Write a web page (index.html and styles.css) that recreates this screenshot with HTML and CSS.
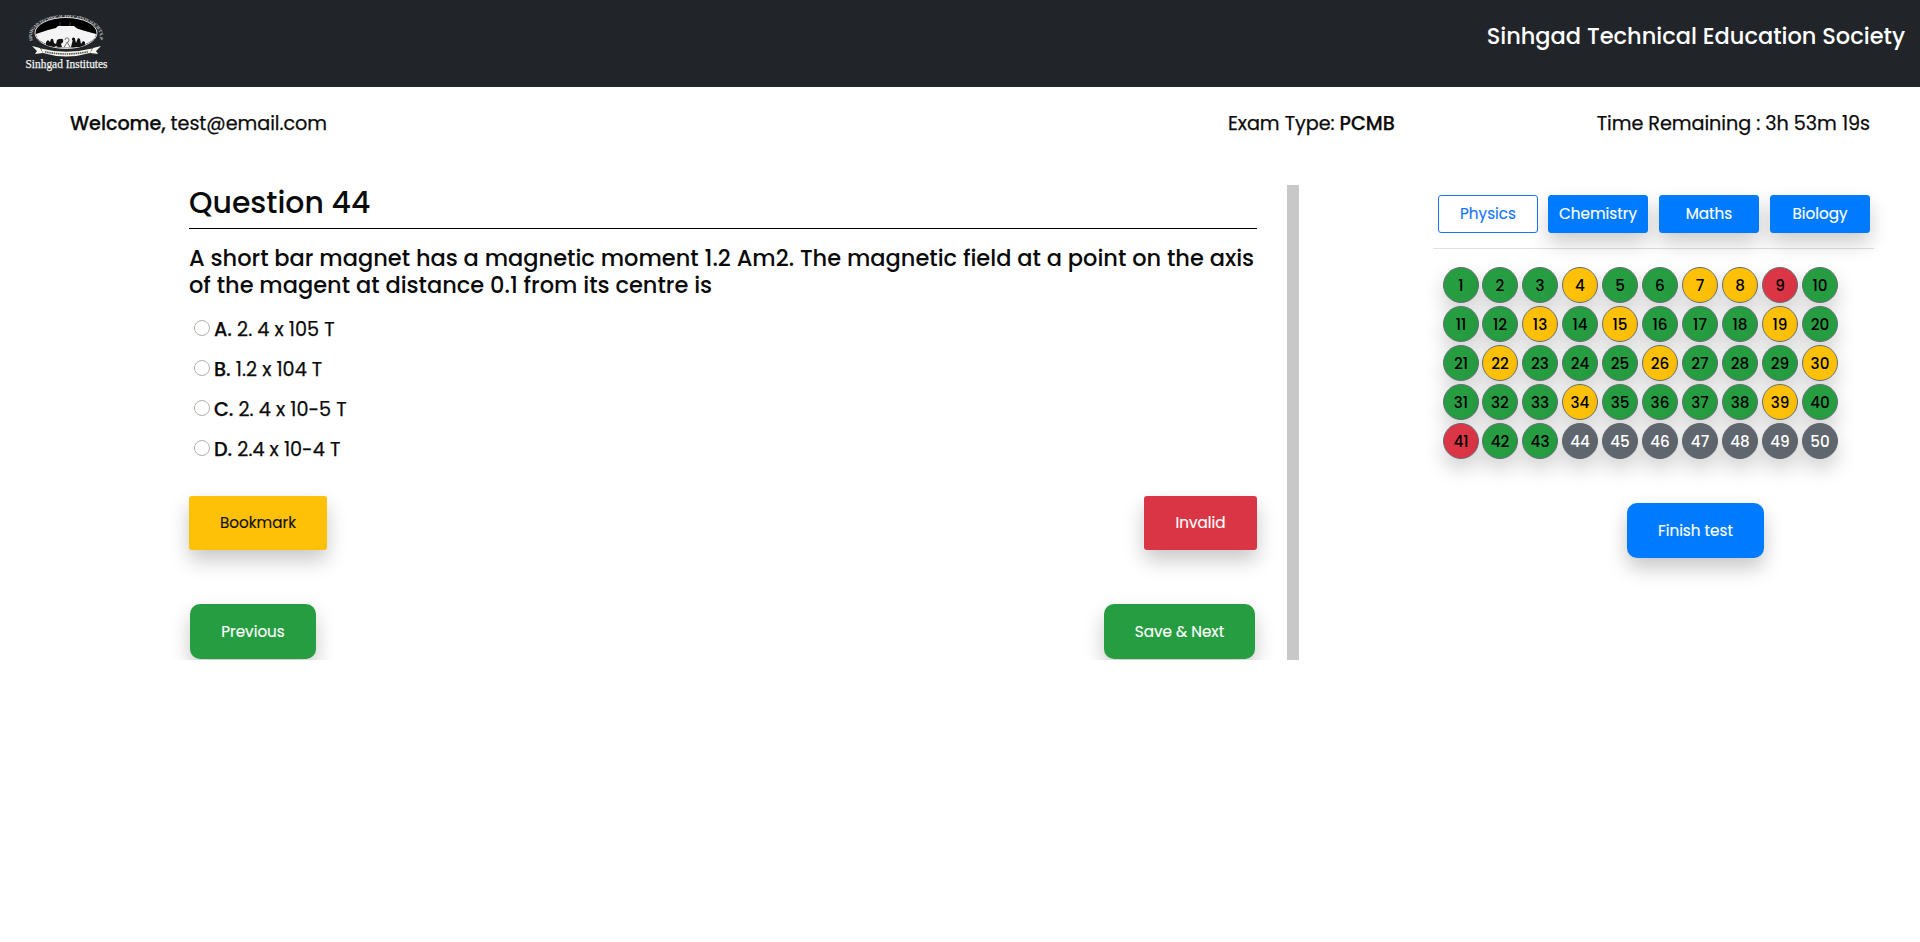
FILE: index.html
```
<!DOCTYPE html>
<html lang="en">
<head>
<meta charset="utf-8">
<title>Sinhgad Technical Education Society</title>
<link rel="stylesheet" href="styles.css">
</head>
<body>
<header class="navbar">
  <svg class="logo" width="90" height="66" viewBox="22 8 90 66" role="img" aria-label="Sinhgad Institutes">
    <defs><path id="arc" d="M33 40.5 A34 18.2 0 1 1 99 40.5"/></defs>
    <text class="logo-arc"><textPath href="#arc">SINHGAD TECHNICAL EDUCATION SOCIETY, PUNE</textPath></text>
    <ellipse cx="66" cy="33" rx="31" ry="15.5" fill="#000" stroke="#d8d8d8" stroke-width="1"/>
    <path d="M36 34 L48 30 L56 28 L58 26 H74 L77 28.5 L85 31 L96 34 C96 42 80 47.7 66 47.7 S36 42 36 34Z" fill="#f4f4f4"/>
    <path d="M60 26V22M70 26V22" stroke="#555" stroke-width=".7"/>
    <path d="M46 45V42l2-2 2 2 1-3h2l1 4 2 1 1-4 2-1 3 0 1 2-2 3 1 3h-4l-2-1-2 1zM71 47l2-8h2l1 4 2-5 2 1 1 5 2-3 2 1v3l-5 2z" fill="#111"/>
    <circle cx="61" cy="41" r="2.3" fill="#111"/><circle cx="73.5" cy="39" r="1.6" fill="#111"/>
    <path d="M65 40a2 2.3 0 1 1 2 2.4l-3 5M67 42l3 5" fill="none" stroke="#555" stroke-width=".8"/>
    <path d="M32 46l8 2 3 5-8 1 2-3zM101 46l-8 2-3 5 8 1-2-3z" fill="#f5f5ea"/>
    <path d="M41 48.5Q66 55 92 48.5L90 53Q66 60 43 53Z" fill="#f5f5ea"/>
    <path d="M45 51.7Q66 56.3 88 51.7" fill="none" stroke="#555" stroke-width="1.6" stroke-dasharray="1.5 .7"/>
    <text class="logo-name" x="25.5" y="68" textLength="82" lengthAdjust="spacingAndGlyphs">Sinhgad Institutes</text>
  </svg>
  <h1 class="brand">Sinhgad Technical Education Society</h1>
</header>
<section class="info">
  <div class="welcome"><b>Welcome,</b> test@email.com</div>
  <div class="exam">Exam Type: <b>PCMB</b></div>
  <div class="time">Time Remaining : 3h 53m 19s</div>
</section>
<main class="main">
  <section class="question">
    <h2 class="q-title">Question 44</h2>
    <p class="q-text">A short bar magnet has a magnetic moment 1.2 Am2. The magnetic field at a point on the axis of the magent at distance 0.1 from its centre is</p>
    <div class="options">
      <label class="option"><i class="radio"></i><span><b>A.</b> 2. 4 x 105 T</span></label>
      <label class="option"><i class="radio"></i><span><b>B.</b> 1.2 x 104 T</span></label>
      <label class="option"><i class="radio"></i><span><b>C.</b> 2. 4 x 10-5 T</span></label>
      <label class="option"><i class="radio"></i><span><b>D.</b> 2.4 x 10-4 T</span></label>
    </div>
    <div class="actions">
      <button class="btn bookmark">Bookmark</button>
      <button class="btn invalid">Invalid</button>
    </div>
    <div class="actions nav">
      <button class="btn round previous">Previous</button>
      <button class="btn round next">Save &amp; Next</button>
    </div>
  </section>
  <div class="divider"></div>
  <aside class="side">
    <div class="tabs">
      <button class="tab active">Physics</button>
      <button class="tab">Chemistry</button>
      <button class="tab">Maths</button>
      <button class="tab">Biology</button>
    </div>
    <div class="grid" id="grid"></div>
    <button class="btn round finish">Finish test</button>
  </aside>
</main>
<script src="app.js"></script>
</body>
</html>
```
FILE: app.js
```
const bookmarked = [4, 7, 8, 13, 15, 19, 22, 26, 30, 34, 39];
const invalid = [9, 41];
const grid = document.getElementById("grid");
for (let n = 1; n <= 50; n++) {
  const cell = document.createElement("button");
  const state = bookmarked.includes(n) ? "marked" : invalid.includes(n) ? "bad" : n >= 44 ? "open" : "done";
  cell.className = "cell " + state;
  cell.textContent = n;
  grid.appendChild(cell);
}
```
FILE: styles.css
```
* { box-sizing: border-box; }
body {
  margin: 0;
  background: #fff;
  color: #0b0b0b;
  font-family: Poppins, Inter, "Open Sans", sans-serif;
}
h1, h2, p { margin: 0; font-weight: 500; }
b { font-weight: 500; }
button { font-family: inherit; }
.navbar {
  height: 87px;
  background: #212529;
  display: flex;
  justify-content: space-between;
  padding: 8px 15px 0 22px;
}
.logo { display: block; overflow: visible; }
.logo-arc { font: 700 4.6px "Liberation Serif", serif; letter-spacing: -.38px; fill: #c4c6c8; }
.logo-name { font: 400 12px "Liberation Serif", serif; fill: #f2f2f2; stroke: #f2f2f2; stroke-width: .25px; }
.brand { color: #fff; font-size: 22.5px; line-height: 56px; }
.info {
  display: flex;
  height: 98px;
  padding: 21px 50px 0 70px;
  font-size: 19.2px;
  line-height: 32px;
  letter-spacing: -.05px;
  -webkit-text-stroke: .25px;
}
.welcome { width: 1158px; }
.exam { flex: 1; }
.main { display: flex; align-items: flex-start; }
.question {
  width: 1287px;
  height: 485px;
  margin-top: -10px;
  padding: 10px 28px 0 189px;
  overflow: hidden;
}
.q-title {
  width: 1068px;
  height: 44px;
  border-bottom: 1px solid #000;
  font-size: 29.9px;
  line-height: 36px;
}
.q-text { padding-top: 16px; font-size: 22.5px; line-height: 27px; letter-spacing: -.003px; }
.options { padding: 10px 0 0 5px; }
.option {
  display: flex;
  align-items: center;
  height: 40px;
  font-size: 19.2px;
  -webkit-text-stroke: .25px;
}
.radio {
  width: 16px;
  height: 16px;
  margin: -2px 4px 0 0;
  border: 1px solid #b5b0aa;
  border-radius: 50%;
}
.actions { display: flex; justify-content: space-between; width: 1068px; padding-top: 27px; }
.nav { padding: 54px 2px 0 1px; }
.btn {
  height: 54px;
  padding: 0 0 1px;
  border: 0;
  border-radius: 3px;
  color: #fff;
  font-size: 15.2px;
  -webkit-text-stroke: .15px;
  box-shadow: 0 10px 20px rgba(0, 0, 0, .22);
}
.round { height: 55px; border-radius: 10px; }
.bookmark { width: 138px; background: #ffc107; color: #111; }
.invalid { width: 113px; background: #da3544; }
.previous { width: 126px; background: #269d41; }
.next { width: 151px; background: #269d41; }
.divider { width: 12px; height: 475px; background: #c8c8c8; }
.side { width: 441px; margin-left: 134px; }
.tabs {
  display: grid;
  grid-template-columns: 110px 111px 111px 100px;
  height: 64px;
  padding: 10px 5px 0;
  border-bottom: 1px solid #dfdfdf;
}
.tab {
  width: 100px;
  height: 38px;
  padding: 0 0 2px;
  border: 1px solid #007bff;
  border-radius: 3px;
  background: #007bff;
  color: #fff;
  font-size: 15.2px;
  -webkit-text-stroke: .15px;
  box-shadow: 0 10px 20px rgba(0, 0, 0, .2);
}
.tab.active { background: #fff; border-color: #1474ff; color: #1474ff; box-shadow: none; }
.grid {
  display: grid;
  grid-template-columns: 39px repeat(9, 40px);
  grid-auto-rows: 39px;
  padding: 18px 0 0 10px;
}
.cell {
  width: 36px;
  height: 36px;
  padding: 0;
  border: 1px solid #666f77;
  border-radius: 50%;
  color: #000;
  font-size: 15.2px;
  font-weight: 500;
  box-shadow: 0 10px 20px rgba(0, 0, 0, .19);
}
.done { background: #269d41; }
.marked { background: #ffc107; }
.bad { background: #dc3545; }
.open { background: #5f666d; border-color: #5f666d; color: #fff; }
.finish { display: block; width: 137px; margin: 41px 0 0 194px; background: #007bff; }
```
